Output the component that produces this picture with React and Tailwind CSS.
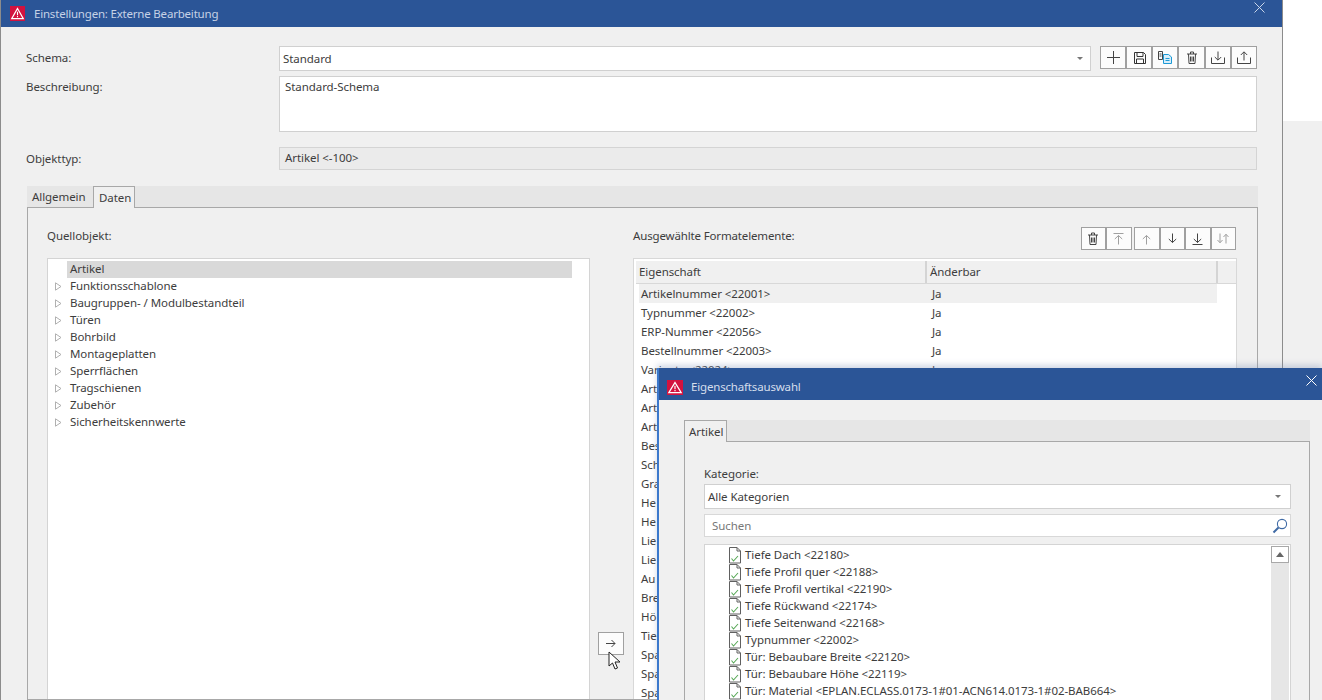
import React from "react";

function Logo({ w = 15, h = 15 }) {
  return (
    <svg width={w} height={h} viewBox="0 0 15 15" preserveAspectRatio="none" className="shrink-0">
      <rect width="15" height="15" fill="#d3123f" />
      <path d="M7.5 2.5 L13.3 12.6 H1.7 Z" fill="none" stroke="#fff" strokeWidth="1.2" />
      <path d="M7.5 5.8 V9 M7.5 9.8 V11.2" stroke="#fff" strokeWidth="1.1" />
    </svg>
  );
}

function CloseX({ size = 11, color = "#c9d6ea" }) {
  return (
    <svg width={size} height={size} viewBox="0 0 11 11">
      <path d="M0.5 0.5 L10.5 10.5 M10.5 0.5 L0.5 10.5" stroke={color} strokeWidth="1" fill="none" />
    </svg>
  );
}

function Ico({ children, w = 14, h = 14 }) {
  return (
    <svg width={w} height={h} viewBox={`0 0 ${w} ${h}`} fill="none" stroke="currentColor" strokeWidth="1">
      {children}
    </svg>
  );
}

const IPlus = () => <Ico w={13} h={13}><path d="M6.5 0 V13 M0 6.5 H13" /></Ico>;
const ISave = () => (
  <Ico w={13} h={13}>
    <path d="M1.5 1.5 H10.5 L12.5 3.5 V12.5 H1.5 Z" stroke="#333" />
    <path d="M4 1.5 V5.5 H10 V1.5 M3.5 12.5 V8 H10.5 V12.5" stroke="#333" />
  </Ico>
);
const ICopy = () => (
  <svg width="14" height="13" viewBox="0 0 14 13" fill="none" strokeWidth="1">
    <path d="M0.5 0.5 H4.5 V8.5 H0.5 Z M1.5 3 H3.5 M1.5 5 H3.5" stroke="#444" />
    <path d="M5.5 3.5 H10.5 L13.5 6 V12.5 H5.5 Z" stroke="#1d9ad6" fill="#d8eefa" />
    <path d="M7.5 7.5 H11.5 M7.5 9.5 H11.5" stroke="#1d9ad6" />
  </svg>
);
const ITrash = () => (
  <Ico w={12} h={13}>
    <path d="M1 3 H11 M4.5 3 V1 H7.5 V3 M2.5 3 L3 12.5 H9 L9.5 3 M4.5 5.5 V10.5 M6 5.5 V10.5 M7.5 5.5 V10.5" />
  </Ico>
);
const IImport = () => (
  <svg width="14" height="13" viewBox="0 0 14 13" fill="none" stroke="currentColor" strokeWidth="1">
    <path d="M0.5 6.5 V12.5 H13.5 V6.5 M7 0.5 V9 M3.8 6 L7 9.2 L10.2 6" />
  </svg>
);
const IExport = () => (
  <svg width="14" height="13" viewBox="0 0 14 13" fill="none" stroke="currentColor" strokeWidth="1">
    <path d="M0.5 6.5 V12.5 H13.5 V6.5 M7 9.5 V1 M3.8 4 L7 0.8 L10.2 4" />
  </svg>
);
const Up = ({ top }) => (
  <svg width="11" height="12" viewBox="0 0 11 12" fill="none" stroke="currentColor" strokeWidth="1">
    {top && <path d="M0.5 0.5 H10.5" />}
    <path d="M5.5 11.5 V2.5 M1.8 6 L5.5 2.5 L9.2 6" />
  </svg>
);
const Down = ({ bottom }) => (
  <svg width="11" height="12" viewBox="0 0 11 12" fill="none" stroke="currentColor" strokeWidth="1">
    {bottom && <path d="M0.5 11.5 H10.5" />}
    <path d="M5.5 0.5 V9.5 M1.8 6 L5.5 9.5 L9.2 6" />
  </svg>
);
const Swap = () => (
  <svg width="12" height="11" viewBox="0 0 12 11" fill="none" stroke="currentColor" strokeWidth="1">
    <path d="M3 0.5 V9.5 M0.5 7 L3 9.8 L5.5 7 M9 10.5 V1.5 M6.5 4 L9 1.2 L11.5 4" />
  </svg>
);

function Btn({ children, w = "w-[26px]", cls = "text-[#444]" }) {
  return (
    <div className={`${w} h-[23px] flex items-center justify-center bg-[#fcfcfc] border border-[#a0a0a0] ${cls}`}>
      {children}
    </div>
  );
}

function Caret() {
  return <div className="w-0 h-0 border-x-[3px] border-x-transparent border-t-[3px] border-t-[#777]" />;
}

function Tri() {
  return (
    <svg width="7" height="9" viewBox="0 0 7 9" className="shrink-0 mt-[4px]">
      <path d="M0.5 0.8 L6 4.5 L0.5 8.2 Z" fill="none" stroke="#b0b0b0" strokeWidth="1" />
    </svg>
  );
}

function FileOk() {
  return (
    <svg width="14" height="17" viewBox="0 0 14 17" fill="none" className="shrink-0">
      <path d="M1.5 0.5 H9 L12.5 4 V16 H1.5 Z" stroke="#606060" fill="#fff" />
      <path d="M9 0.5 V4 H12.5" stroke="#606060" />
      <path d="M3.5 11.5 L5.5 14 L10 9" stroke="#58a957" strokeWidth="1.1" />
    </svg>
  );
}

const treeItems = [
  "Funktionsschablone",
  "Baugruppen- / Modulbestandteil",
  "Türen",
  "Bohrbild",
  "Montageplatten",
  "Sperrflächen",
  "Tragschienen",
  "Zubehör",
  "Sicherheitskennwerte",
];

const rows = [
  "Artikelnummer <22001>",
  "Typnummer <22002>",
  "ERP-Nummer <22056>",
  "Bestellnummer <22003>",
  "Variante <22024>",
  "Art",
  "Art",
  "Art",
  "Bes",
  "Sch",
  "Gra",
  "He",
  "He",
  "Lie",
  "Lie",
  "Au",
  "Bre",
  "Hö",
  "Tie",
  "Spa",
  "Spa",
  "Spa",
];

const dlgItems = [
  "Tiefe Dach <22180>",
  "Tiefe Profil quer <22188>",
  "Tiefe Profil vertikal <22190>",
  "Tiefe Rückwand <22174>",
  "Tiefe Seitenwand <22168>",
  "Typnummer <22002>",
  "Tür: Bebaubare Breite <22120>",
  "Tür: Bebaubare Höhe <22119>",
  "Tür: Material <EPLAN.ECLASS.0173-1#01-ACN614.0173-1#02-BAB664>",
];

export default function App() {
  return (
    <div className="relative h-[700px] w-[1322px] overflow-hidden bg-white flex text-[11.5px] leading-4 tracking-[-0.07px] text-[#3d3d3d] font-['Noto_Sans','Open_Sans',sans-serif]">
      {/* Main window */}
      <div className="w-[1283px] h-[700px] shrink-0 bg-[#f0f0f0] border-x border-[#8c8c8c] flex flex-col overflow-hidden">
        <div className="h-[27px] shrink-0 bg-[#2b5597] flex items-center pl-[10px] pr-[18px] -mx-px">
          <Logo />
          <span className="ml-[9px] pt-px tracking-[-0.2px] text-[#c6d2e6]">Einstellungen: Externe Bearbeitung</span>
          <div className="ml-auto -mt-[13px]"><CloseX /></div>
        </div>

        <div className="px-[25px] pt-[19px]">
          <div className="flex h-[25px]">
            <div className="w-[253px] pt-[4px]">Schema:</div>
            <div className="w-[812px] h-[25px] bg-white border border-[#d0d0d0] flex items-center pl-[3px] pr-[7px] justify-between">
              <span>Standard</span>
              <Caret />
            </div>
            <div className="ml-[9px] flex">
              <Btn w="w-[26.17px]"><IPlus /></Btn>
              <Btn w="w-[26.17px]"><ISave /></Btn>
              <Btn w="w-[26.17px]"><ICopy /></Btn>
              <Btn w="w-[26.17px]"><ITrash /></Btn>
              <Btn w="w-[26.17px]"><IImport /></Btn>
              <Btn w="w-[26.17px]"><IExport /></Btn>
            </div>
          </div>
          <div className="flex h-[56px] mt-[5px]">
            <div className="w-[253px] pt-[3px]">Beschreibung:</div>
            <div className="flex-1 bg-white border border-[#d0d0d0] pl-[5px] pt-[2px]">Standard-Schema</div>
          </div>
          <div className="flex h-[23px] mt-[15px]">
            <div className="w-[253px] pt-[4px]">Objekttyp:</div>
            <div className="flex-1 bg-[#ebebeb] border border-[#d4d4d4] pl-[5px] pt-[2px]">Artikel &lt;-100&gt;</div>
          </div>
        </div>

        <div className="pl-[26px] pr-[24px] mt-[16px] flex-1 flex flex-col min-h-0">
          <div className="h-[21px] bg-[#e6e6e6] flex items-start shrink-0">
            <div className="w-[66px] h-[21px] pl-[5px] pt-[3px]">Allgemein</div>
            <div className="relative z-10 w-[42px] h-[22px] bg-[#f0f0f0] border border-b-0 border-[#a8a8a8] pl-[5px] pt-[3px]">Daten</div>
          </div>
          <div className="flex-1 min-h-0 border border-[#a8a8a8] flex overflow-hidden">
            <div className="w-[543px] ml-[19px] pt-[20px] shrink-0">
              <div>Quellobjekt:</div>
              <div className="mt-[14px] h-[460px] bg-white border border-[#d4d4d4] pt-[2px] pl-[7px]">
                <div className="h-[17px] ml-[12px] mr-[17px] bg-[#d9d9d9] pl-[3px]">Artikel</div>
                {treeItems.map((t) => (
                  <div key={t} className="h-[17px] flex items-start">
                    <Tri />
                    <span className="ml-[8px]">{t}</span>
                  </div>
                ))}
              </div>
            </div>

            <div className="w-[43px] shrink-0 pl-[8px] pt-[424px]">
              <Btn><svg width="10" height="9" viewBox="0 0 10 9" fill="none" stroke="currentColor" strokeWidth="1"><path d="M0 4.5 H9 M5.5 1 L9 4.5 L5.5 8" /></svg></Btn>
            </div>

            <div className="w-[604px] shrink-0 pt-[20px]">
              <div className="flex justify-between h-[30px]">
                <span className="tracking-[-0.15px]">Ausgewählte Formatelemente:</span>
                <div className="flex -mt-[1px] gap-[2.5px] h-[23px] pr-px">
                  <div className="flex">
                    <Btn w="w-[25.5px]"><ITrash /></Btn>
                    <Btn w="w-[25.5px]" cls="text-[#a0a0a0]"><Up top /></Btn>
                  </div>
                  <div className="flex">
                    <Btn w="w-[25.5px]" cls="text-[#a0a0a0]"><Up /></Btn>
                    <Btn w="w-[25.5px]"><Down /></Btn>
                    <Btn w="w-[25.5px]"><Down bottom /></Btn>
                    <Btn w="w-[25.5px]" cls="text-[#a0a0a0]"><Swap /></Btn>
                  </div>
                </div>
              </div>
              <div className="h-[460px] bg-white border border-[#d8d8d8] pt-[2px] pl-[2px]">
                <div className="h-[23px] bg-[#f0f0f0] border-b border-[#d8d8d8] flex">
                  <div className="w-[291px] border-r-2 border-[#d4d4d4] pl-[3px] pt-[3px]">Eigenschaft</div>
                  <div className="w-[291px] border-r-2 border-[#d4d4d4] pl-[3px] pt-[3px]">Änderbar</div>
                </div>
                {rows.map((r, i) => (
                  <div key={i} className={`h-[19px] ml-[3px] w-[578px] flex items-center ${i === 0 ? "bg-[#f0f0f0]" : ""}`}>
                    <span className="w-[291px] pl-[2px] shrink-0">{r}</span>
                    {i < 5 && <span className="pl-[2px]">Ja</span>}
                  </div>
                ))}
              </div>
            </div>
          </div>
        </div>
      </div>

      {/* Desktop behind, right of the window */}
      <div className="flex-1 flex flex-col">
        <div className="h-[121px] bg-white" />
        <div className="flex-1 bg-[#f0f0f0]" />
      </div>

      {/* Mouse cursor */}
      <svg width="14" height="20" viewBox="0 0 14 20" className="absolute left-[608px] top-[651px]">
        <path d="M1 1 V15 L4.5 12 L7 18 L9.5 17 L7 11 H12 Z" fill="#fff" stroke="#222" strokeWidth="1" />
      </svg>

      {/* Property selection dialog */}
      <div className="absolute left-[657px] top-[368px] w-[665px] h-[332px] bg-[#f0f0f0] border-l-2 border-[#3b78cc] shadow-[0_-3px_6px_rgba(120,140,180,0.35)] flex flex-col">
        <div className="h-[32px] shrink-0 bg-[#2b5597] flex items-center pl-[8px] pr-[5px] pt-[6px]">
          <Logo w={16} h={15} />
          <span className="ml-[8px] tracking-[-0.17px] text-[#d5deec]">Eigenschaftsauswahl</span>
          <div className="ml-auto -mt-[14px]"><CloseX color="#fff" /></div>
        </div>
        <div className="pl-[25px] pr-[12px] mt-[20px] flex-1 flex flex-col min-h-0">
          <div className="h-[21px] shrink-0 bg-[#e6e6e6] flex items-start">
            <div className="relative z-10 w-[43px] h-[22px] bg-[#f0f0f0] border border-b-0 border-[#a8a8a8] pl-[4px] pt-[3px]">Artikel</div>
          </div>
          <div className="flex-1 min-h-0 border border-b-0 border-[#a8a8a8] pl-[19px] pr-[18px] pt-[24px] overflow-hidden">
            <div className="h-[18px]">Kategorie:</div>
            <div className="h-[25px] bg-white border border-[#d0d0d0] flex items-center justify-between pl-[3px] pr-[9px]">
              <span>Alle Kategorien</span>
              <Caret />
            </div>
            <div className="h-[23px] mt-[5px] bg-white border border-[#d8d8d8] flex items-center justify-between pl-[7px] pr-[2px]">
              <span className="text-[#777]">Suchen</span>
              <svg width="16" height="16" viewBox="0 0 16 16" fill="none">
                <circle cx="10" cy="6" r="4.6" stroke="#3f6aa5" strokeWidth="1.1" />
                <path d="M6.5 9.5 L1.5 14.5" stroke="#3f6aa5" strokeWidth="2" />
              </svg>
            </div>
            <div className="h-[170px] mt-[7px] bg-white border border-[#d4d4d4] flex">
              <div className="flex-1 pt-[2px] pl-[23px]">
                {dlgItems.map((t) => (
                  <div key={t} className="h-[17px] flex items-start">
                    <FileOk />
                    <span className="ml-[3px] whitespace-nowrap">{t}</span>
                  </div>
                ))}
              </div>
              <div className="w-[18px] mr-[1px] mt-px bg-[#e6e6e6]">
                <div className="h-[17px] bg-white border border-[#a8a8a8] flex items-center justify-center">
                  <div className="w-0 h-0 border-x-[4px] border-x-transparent border-b-[5px] border-b-[#666]" />
                </div>
              </div>
            </div>
          </div>
        </div>
      </div>
    </div>
  );
}
